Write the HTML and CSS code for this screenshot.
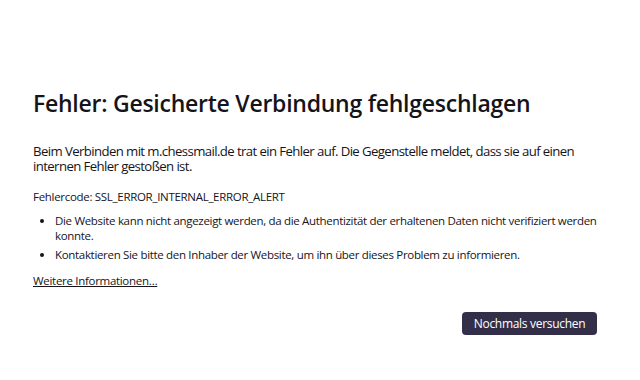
FILE: index.html
```html
<!DOCTYPE html>
<html lang="de">
<head>
  <meta charset="UTF-8">
  <title>Fehler beim Laden der Seite</title>
  <link rel="stylesheet" href="styles.css">
</head>
<body>
  <div class="container">
    <h1 class="title">Fehler: Gesicherte Verbindung fehlgeschlagen</h1>
    <p class="intro">Beim Verbinden mit m.chessmail.de trat ein Fehler auf. Die Gegenstelle meldet, dass sie auf einen internen Fehler gestoßen ist.</p>
    <p class="error-code">Fehlercode: SSL_ERROR_INTERNAL_ERROR_ALERT</p>
    <ul class="details">
      <li>Die Website kann nicht angezeigt werden, da die Authentizität der erhaltenen Daten nicht verifiziert werden konnte.</li>
      <li>Kontaktieren Sie bitte den Inhaber der Website, um ihn über dieses Problem zu informieren.</li>
    </ul>
    <a class="learn-more" href="#">Weitere Informationen…</a>
    <div class="actions">
      <button class="retry">Nochmals versuchen</button>
    </div>
  </div>
</body>
</html>
```

FILE: styles.css
```css
* {
  margin: 0;
  padding: 0;
  box-sizing: border-box;
}

body {
  font-family: "Open Sans", "Noto Sans", sans-serif;
  background-color: #ffffff;
  color: #15141a;
  padding: 86px 33px 0 33px;
}

.container {
  max-width: 574px;
}

.title {
  font-size: 23px;
  font-weight: 600;
  letter-spacing: -0.25px;
  line-height: 34px;
  margin-bottom: 24px;
}

.intro {
  font-size: 13.2px;
  letter-spacing: -0.6px;
  line-height: 15px;
  margin-bottom: 15px;
  max-width: 564px;
}

.error-code {
  font-size: 11.5px;
  letter-spacing: -0.3px;
  line-height: 16px;
  margin-bottom: 8px;
}

.details {
  font-size: 11.5px;
  letter-spacing: -0.32px;
  line-height: 15px;
  padding-left: 22px;
  margin-bottom: 6px;
}

.details li {
  margin-bottom: 4px;
}

.learn-more {
  display: inline-block;
  font-size: 11.5px;
  letter-spacing: -0.3px;
  line-height: 16px;
  color: #15141a;
  text-decoration: underline;
}

.actions {
  display: flex;
  justify-content: flex-end;
  margin-top: 22px;
  padding-right: 10px;
}

.retry {
  font-family: inherit;
  font-size: 12px;
  letter-spacing: -0.3px;
  color: #ffffff;
  background-color: #332f49;
  border: none;
  border-radius: 4px;
  width: 135px;
  height: 23px;
}
```
